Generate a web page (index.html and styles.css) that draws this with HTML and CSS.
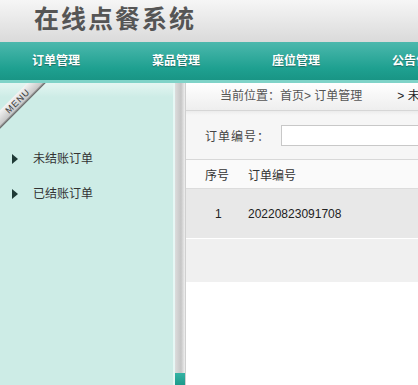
FILE: index.html
```html
<!DOCTYPE html>
<html lang="zh-CN">
<head>
    <meta charset="UTF-8">
    <meta name="viewport" content="width=device-width, initial-scale=1.0">
    <title>在线点餐系统</title>
    <link rel="stylesheet" href="styles.css">
</head>
<body>

<header class="top">
    <h1 class="logo">在线点餐系统</h1>
</header>

<nav class="nav">
    <a href="#">订单管理</a>
    <a href="#">菜品管理</a>
    <a href="#">座位管理</a>
    <a href="#">公告信息</a>
</nav>

<div class="wrap">
    <div class="sidebar">
        <div class="ribbon">MENU</div>
        <ul class="menu">
            <li><a href="#">未结账订单</a></li>
            <li><a href="#">已结账订单</a></li>
        </ul>
    </div>

    <div class="splitter"><span class="handle"></span></div>

    <div class="main">
        <div class="crumb">
            <span>当前位置：首页&gt; 订单管理</span>
            <span class="sub">&gt; 未结账订单</span>
        </div>

        <div class="search">
            <label for="orderNo">订单编号：</label>
            <input type="text" id="orderNo">
        </div>

        <table class="list">
            <thead>
                <tr>
                    <th class="col-no">序号</th>
                    <th>订单编号</th>
                </tr>
            </thead>
            <tbody>
                <tr class="row1">
                    <td class="col-no">1</td>
                    <td>20220823091708</td>
                </tr>
                <tr class="row2">
                    <td></td>
                    <td></td>
                </tr>
            </tbody>
        </table>
    </div>
</div>

</body>
</html>
```

FILE: styles.css
```css
/* CSS */
html, body {
    margin: 0;
    padding: 0;
    height: 100%;
    overflow: hidden;
}

body {
    font-family: "Liberation Sans", "Noto Sans CJK SC", sans-serif;
    font-size: 12px;
    color: #333;
    background-color: #fff;
    display: flex;
    flex-direction: column;
}

.top {
    height: 42px;
    background: linear-gradient(#f6f6f6, #dadada);
}

.logo {
    margin: 0;
    padding-left: 34px;
    font-family: "Noto Sans CJK SC", sans-serif;
    font-size: 25px;
    font-weight: 700;
    letter-spacing: 2px;
    line-height: 34px;
    color: #555;
}

.nav {
    height: 38px;
    display: flex;
    margin-left: -4px;
    background: linear-gradient(#4cb8ad, #1ea090 70%, #199585);
    border-bottom: 3px solid #7fd3c8;
}

.nav a {
    flex: none;
    width: 120px;
    text-align: center;
    line-height: 38px;
    color: #fff;
    font-weight: bold;
    font-size: 12px;
    text-decoration: none;
    text-shadow: 0 1px 1px rgba(0, 0, 0, 0.35);
}

.wrap {
    flex: 1;
    display: flex;
    min-height: 0;
}

.sidebar {
    position: relative;
    width: 173px;
    overflow: hidden;
    background: linear-gradient(#e4f6f2, #cdece6 14px);
    border-right: 2px solid #e6f7f4;
}

.ribbon {
    position: absolute;
    left: -22px;
    top: 12px;
    width: 80px;
    height: 13px;
    line-height: 13px;
    text-align: center;
    font-size: 9px;
    letter-spacing: 1px;
    color: #333;
    background: linear-gradient(#f4f4f4, #c9c9c9 80%, #555);
    transform: rotate(-45deg);
}

.menu {
    list-style: none;
    margin: 64px 0 0;
    padding: 0;
}

.menu li {
    position: relative;
    height: 35px;
    line-height: 24px;
    padding-left: 33px;
}

.menu li::before {
    content: "";
    position: absolute;
    left: 12px;
    top: 7px;
    border-left: 6px solid #1f3a36;
    border-top: 5px solid transparent;
    border-bottom: 5px solid transparent;
}

.menu a {
    color: #333;
    font-size: 12px;
    text-decoration: none;
}

.splitter {
    width: 10px;
    display: flex;
    flex-direction: column;
    justify-content: flex-end;
    background: linear-gradient(to right, #dcdcdc, #c6c6c6 60%, #efefef);
}

.handle {
    height: 12px;
    background: linear-gradient(#34b3a4, #1d9a8b);
}

.main {
    flex: 1;
    min-width: 0;
    overflow: hidden;
    border-left: 1px solid #d0d0d0;
}

.crumb {
    height: 27px;
    line-height: 27px;
    padding-left: 34px;
    display: flex;
    white-space: nowrap;
    color: #555;
    background: linear-gradient(#fff, #eeeeee);
    border-bottom: 1px solid #d6d6d6;
}

.crumb span {
    flex: none;
}

.crumb .sub {
    margin-left: 35px;
    color: #222;
}

.search {
    height: 48px;
    display: flex;
    align-items: center;
    padding-left: 19px;
    white-space: nowrap;
    color: #444;
    background: linear-gradient(#ececec, #f6f6f6 4px);
    border-bottom: 1px solid #d8d8d8;
}

.search label {
    flex: none;
    width: 76px;
    letter-spacing: 1px;
}

.search input {
    flex: none;
    width: 200px;
    height: 19px;
    padding: 0;
    border: 1px solid #c8c8c8;
    background: #fff;
}

.list {
    width: 100%;
    border-collapse: collapse;
}

.list th,
.list td {
    text-align: left;
    font-weight: normal;
    padding: 0;
    white-space: nowrap;
}

.list th {
    height: 28px;
    background-color: #fafafa;
    border-bottom: 1px solid #dcdcdc;
    color: #333;
}

.list .col-no {
    width: 43px;
    padding-left: 19px;
}

.list td.col-no {
    padding-left: 29px;
    width: 33px;
}

.row1 td {
    height: 49px;
    background-color: #e8e8e8;
    border-bottom: 1px solid #fff;
    color: #222;
}

.row2 td {
    height: 43px;
    background-color: #f0f0f0;
}
```
